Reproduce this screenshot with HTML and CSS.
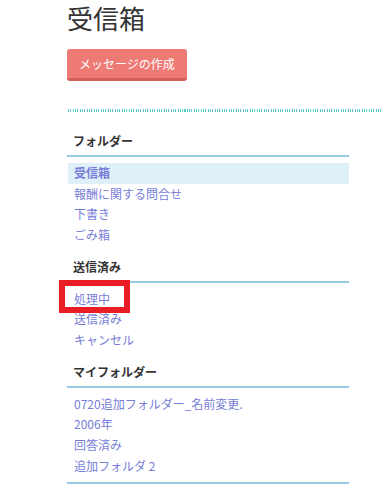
FILE: index.html
```html
<!DOCTYPE html>
<html lang="ja">
<head>
  <meta charset="UTF-8" />
  <meta name="viewport" content="width=device-width, initial-scale=1.0"/>
  <title>受信箱</title>
  <link rel="stylesheet" href="styles.css">
</head>
<body>

  <div class="page">
    <h1 class="title">受信箱</h1>
    <button class="btn">メッセージの作成</button>

    <div class="dots"></div>

    <!-- Folders -->
    <section class="box">
      <h3>フォルダー</h3>
      <ul>
        <li class="active"><a href="#">受信箱</a></li>
        <li><a href="#">報酬に関する問合せ</a></li>
        <li><a href="#">下書き</a></li>
        <li><a href="#">ごみ箱</a></li>
      </ul>
    </section>

    <!-- Sent -->
    <section class="box">
      <h3>送信済み</h3>
      <ul>
        <li><a href="#">処理中</a></li>
        <li><a href="#">送信済み</a></li>
        <li><a href="#">キャンセル</a></li>
      </ul>
    </section>

    <!-- My folders -->
    <section class="box last">
      <h3>マイフォルダー</h3>
      <ul>
        <li><a href="#">0720追加フォルダー_名前変更.</a></li>
        <li><a href="#">2006年</a></li>
        <li><a href="#">回答済み</a></li>
        <li><a href="#">追加フォルダ 2</a></li>
      </ul>
    </section>

    <div class="mark"></div>
  </div>

</body>
</html>
```

FILE: styles.css
```css
body {
  margin: 0;
  background: #fff;
  font-family: "Noto Sans CJK JP", "Noto Sans", sans-serif;
  color: #333;
}
.page {
  position: relative;
  padding-left: 67px;
}
.title {
  margin: 0;
  font-size: 26px;
  font-weight: normal;
  line-height: 36px;
  color: #333;
}
.btn {
  display: block;
  margin-top: 13px;
  height: 32px;
  padding: 0 12px;
  background-color: #ee7a76;
  color: #fff;
  border: none;
  border-bottom: 3px solid #d2605d;
  border-radius: 3px;
  font-family: inherit;
  font-size: 12px;
  line-height: 29px;
  cursor: pointer;
}
.dots {
  margin-top: 28px;
  margin-left: 1px;
  height: 3px;
  background: repeating-linear-gradient(90deg, #5cc6c9 0 1px, transparent 1px 2.33px);
}

/* Folder boxes */
.box {
  width: 282px;
  margin-top: 19px;
}
.box + .box {
  margin-top: 11px;
}
.box h3 {
  margin: 0;
  padding: 0 0 4px 6px;
  font-size: 12px;
  font-weight: bold;
  line-height: 20px;
  color: #333;
  border-bottom: 2px solid #94cbe5;
}
.box ul {
  list-style: none;
  margin: 6px 0 0;
  padding: 0;
}
.box li {
  height: 20.67px;
  line-height: 20.67px;
  padding-left: 6px;
  margin-left: 1px;
  font-size: 12px;
}
.box li a {
  color: #777dd8;
  text-decoration: none;
}
.box li.active {
  background: #dff0f8;
}
.box li.active a {
  font-weight: bold;
}
.box.last {
  padding-bottom: 6px;
  border-bottom: 2px solid #94cbe5;
}

/* annotation box */
.mark {
  position: absolute;
  left: 59px;
  top: 280px;
  width: 59px;
  height: 21px;
  border: 6px solid #ea1c24;
}
```
